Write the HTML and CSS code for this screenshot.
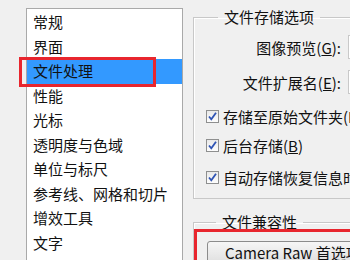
FILE: index.html
```html
<!DOCTYPE html>
<html>
<head>
<meta charset="utf-8">
<link rel="stylesheet" href="styles.css">
</head>
<body>
<div class="page">
  <div class="list">
    <div class="item">常规</div>
    <div class="item">界面</div>
    <div class="item selected">文件处理</div>
    <div class="item">性能</div>
    <div class="item">光标</div>
    <div class="item">透明度与色域</div>
    <div class="item">单位与标尺</div>
    <div class="item">参考线、网格和切片</div>
    <div class="item">增效工具</div>
    <div class="item">文字</div>
  </div>
  <div class="right">
    <fieldset class="group group1">
      <legend>文件存储选项</legend>
      <div class="field first">
        <span class="label">图像预览(<u>G</u>):</span>
        <span class="input"></span>
      </div>
      <div class="field second">
        <span class="label">文件扩展名(<u>E</u>):</span>
        <span class="input"></span>
      </div>
      <div class="check c1"><span class="box"><svg viewBox="0 0 11 11" width="11" height="11"><path d="M2 5.5 L4.3 8.3 L9 1.8" fill="none" stroke="#2e53b4" stroke-width="1.8"/></svg></span><span>存储至原始文件夹(I)</span></div>
      <div class="check c2"><span class="box"><svg viewBox="0 0 11 11" width="11" height="11"><path d="M2 5.5 L4.3 8.3 L9 1.8" fill="none" stroke="#2e53b4" stroke-width="1.8"/></svg></span><span>后台存储(<u>B</u>)</span></div>
      <div class="check c3"><span class="box"><svg viewBox="0 0 11 11" width="11" height="11"><path d="M2 5.5 L4.3 8.3 L9 1.8" fill="none" stroke="#2e53b4" stroke-width="1.8"/></svg></span><span>自动存储恢复信息时间间隔</span></div>
    </fieldset>
    <fieldset class="group group2">
      <legend>文件兼容性</legend>
      <div class="button">Camera Raw 首选项...</div>
    </fieldset>
  </div>
  <div class="mark mark1"></div>
  <div class="mark mark2"></div>
</div>
</body>
</html>
```
FILE: styles.css
```css
html, body {
  margin: 0;
  padding: 0;
  width: 350px;
  height: 260px;
  overflow: hidden;
  background: #f0f0f0;
}
.page {
  position: relative;
  display: flex;
  align-items: flex-start;
  width: 350px;
  height: 260px;
  overflow: hidden;
  font-family: "Noto Sans CJK SC", "Noto Sans", sans-serif;
  font-size: 15px;
  color: #111;
}
.list {
  margin-left: 26px;
  margin-top: 8px;
  width: 155px;
  height: 270px;
  flex: none;
  background: #fff;
  border-left: 1px solid #a9a9a9;
  border-top: 1px solid #a9a9a9;
  border-right: 1px solid #a9a9a9;
  padding-top: 1px;
}
.item {
  height: 24.5px;
  line-height: 24.5px;
  padding-left: 6px;
  white-space: nowrap;
}
.item.selected {
  background: #3399ff;
}
.right {
  margin-left: 10px;
  width: 220px;
  flex: none;
  display: flex;
  flex-direction: column;
}
.group {
  margin: 0;
  padding: 0;
  border: 1px solid #c8c8c8;
  box-shadow: inset 1px 1px 0 #fff;
  min-width: 0;
}
.group legend {
  margin-left: 24px;
  padding: 0 6px;
  line-height: 20px;
  font-size: 15px;
}
.group1 {
  margin-top: 7px;
  padding-bottom: 10px;
}
.field {
  display: flex;
  align-items: center;
  height: 24px;
  gap: 7px;
}
.field.first { margin-top: 8px; }
.field.second { margin-top: 11px; }
.label {
  width: 147px;
  flex: none;
  text-align: right;
  white-space: nowrap;
}
.input {
  width: 80px;
  height: 22px;
  flex: none;
  background: #fff;
  border: 1px solid #c9c9c9;
}
.check {
  display: flex;
  align-items: center;
  height: 22px;
  padding-left: 12px;
  gap: 4px;
  white-space: nowrap;
}
.check.c1 { margin-top: 11px; }
.check.c2 { margin-top: 7px; }
.check.c3 { margin-top: 10px; }
.box {
  width: 11px;
  height: 11px;
  flex: none;
  border: 1px solid #8e8f8f;
  background: linear-gradient(#e9e9e9, #fdfdfd);
  display: flex;
}
.group2 {
  margin-top: 13px;
  padding-left: 13px;
  height: 60px;
}
.group2 legend {
  margin-left: 9px;
}
.button {
  margin-top: 9px;
  width: 180px;
  height: 24px;
  line-height: 22px;
  border: 1px solid #8c8c8c;
  border-radius: 3px;
  background: linear-gradient(#f6f6f6, #dcdcdc);
  padding-left: 17px;
  white-space: nowrap;
  font-size: 15px;
}
.mark {
  position: absolute;
  border: 3px solid #e8262e;
  box-sizing: border-box;
}
.mark1 {
  left: 19px;
  top: 57px;
  width: 137px;
  height: 30px;
}
.mark2 {
  left: 194px;
  top: 229px;
  width: 200px;
  height: 60px;
}
```
